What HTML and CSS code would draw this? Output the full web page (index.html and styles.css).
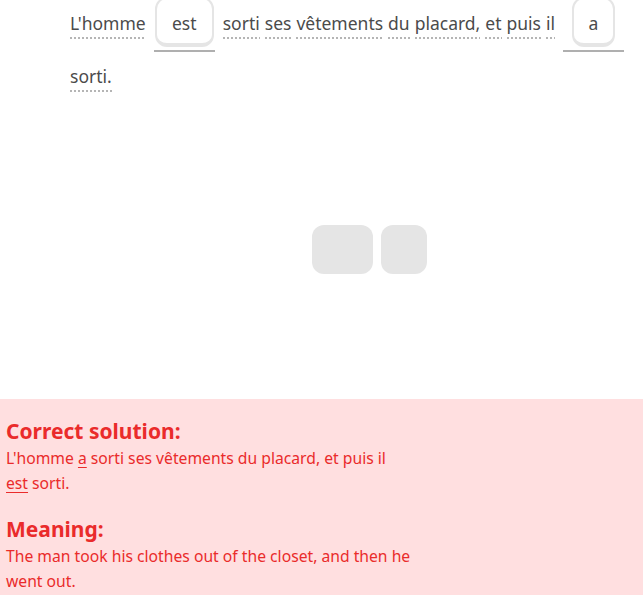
FILE: index.html
```html
<!DOCTYPE html>
<html lang="fr">
<head>
<meta charset="utf-8">
<title>Exercise</title>
<link rel="stylesheet" href="styles.css">
</head>
<body>
<div class="page">
  <div class="sentence">
    <span class="word">L'homme</span>
    <span class="slot"><span class="chip">est</span></span>
    <span class="word">sorti</span>
    <span class="word">ses</span>
    <span class="word">vêtements</span>
    <span class="word">du</span>
    <span class="word">placard,</span>
    <span class="word">et</span>
    <span class="word">puis</span>
    <span class="word">il</span>
    <span class="slot"><span class="chip">a</span></span>
    <span class="word">sorti.</span>
  </div>
  <div class="bank">
    <span class="tile tile-wide"></span>
    <span class="tile tile-narrow"></span>
  </div>
  <div class="feedback">
    <h2 class="fb-title">Correct solution:</h2>
    <p class="fb-text">L'homme <u>a</u> sorti ses vêtements du placard, et puis il <u>est</u> sorti.</p>
    <h2 class="fb-title">Meaning:</h2>
    <p class="fb-text">The man took his clothes out of the closet, and then he went out.</p>
  </div>
</div>
</body>
</html>
```
FILE: styles.css
```css
html, body {
  margin: 0;
  padding: 0;
  background: #ffffff;
}
body {
  font-family: "Noto Sans", "Roboto", sans-serif;
  color: #4b4b4b;
  overflow: hidden;
}
.page {
  width: 643px;
  height: 595px;
  display: flex;
  flex-direction: column;
}
.sentence {
  margin-top: -3px;
  padding-left: 70px;
  display: flex;
  flex-wrap: wrap;
  align-items: center;
  column-gap: 5px;
  row-gap: 12px;
  font-size: 17.5px;
}
.word {
  line-height: 24px;
  background-image: repeating-linear-gradient(to right, #b5b5b5 0 2px, transparent 2px 4px);
  background-size: 100% 2px;
  background-repeat: no-repeat;
  background-position: left bottom;
  padding-bottom: 4px;
}
.slot {
  min-width: 61px;
  margin: 0 3px;
  height: 55px;
  box-sizing: border-box;
  border-bottom: 2px solid #afafaf;
  display: flex;
  justify-content: center;
  align-items: flex-start;
}
.chip {
  height: 50px;
  box-sizing: border-box;
  padding: 3px 15px 0;
  border: 2px solid #e5e5e5;
  border-bottom-width: 4px;
  border-radius: 12px;
  display: flex;
  align-items: center;
  justify-content: center;
}
.bank {
  margin-top: 133px;
  padding-left: 312px;
  display: flex;
  gap: 8px;
}
.tile {
  height: 49px;
  border-radius: 12px;
  background: #e5e5e5;
}
.tile-wide { width: 61px; }
.tile-narrow { width: 46px; }
.feedback {
  margin-top: 125px;
  flex: 1;
  background: #ffdfe0;
  padding: 17px 6px 0;
  color: #ea2b2b;
}
.fb-title {
  margin: 0;
  font-size: 21px;
  font-weight: 700;
  line-height: 30px;
}
.fb-text {
  margin: 0 0 18px;
  max-width: 405px;
  font-size: 15.7px;
  line-height: 25px;
}
.fb-text u {
  text-underline-offset: 3px;
}
```
